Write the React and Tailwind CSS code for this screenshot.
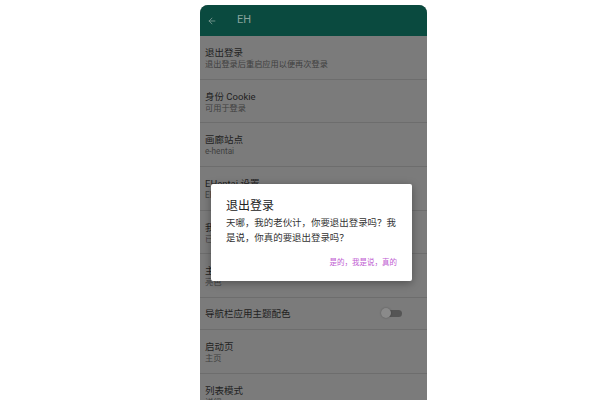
import { ArrowLeft } from "lucide-react";

const items = [
  { title: "退出登录", sub: "退出登录后重启应用以便再次登录" },
  { title: "身份 Cookie", sub: "可用于登录" },
  { title: "画廊站点", sub: "e-hentai" },
  { title: "EHentai 设置", sub: "EHentai 网站的设置" },
  { title: "我的标签", sub: "已关注的标签" },
  { title: "主题", sub: "亮色" },
  { title: "导航栏应用主题配色", toggle: true },
  { title: "启动页", sub: "主页" },
  { title: "列表模式", sub: "详细" },
];

function Row({ item }) {
  if (item.toggle) {
    return (
      <div className="flex h-[32px] items-center justify-between border-b border-[#6d6d6d] pl-[5px] pr-[25px]">
        <span className="text-[9.5px] leading-[12px] text-[#1f1f1f]">{item.title}</span>
        <div className="relative h-[7px] w-[18px] rounded-full bg-[#555555]">
          <div className="absolute -left-[3px] -top-[2px] h-[10px] w-[10px] rounded-full bg-[#8a8a8a] shadow-[0_0_2px_rgba(0,0,0,0.3)]" />
        </div>
      </div>
    );
  }
  return (
    <div className="flex h-[43.7px] flex-col border-b border-[#6d6d6d] pl-[5px] pt-[11px]">
      <span className="text-[9.5px] leading-[12px] text-[#1f1f1f]">{item.title}</span>
      <span className="text-[8.2px] leading-[11px] text-[#404040]">{item.sub}</span>
    </div>
  );
}

export default function App() {
  return (
    <div className="flex min-h-[400px] bg-white pl-[200px] font-['Roboto','Noto_Sans_CJK_SC',sans-serif]">
      <div className="relative mt-[5px] h-[395px] w-[227px] overflow-hidden rounded-t-[8px] bg-[#7b7b7b]">
        <header className="flex h-[31px] items-center gap-[20px] bg-[#0a4a3f] pl-[7px]">
          <ArrowLeft size={10} strokeWidth={2} className="text-[#7f9c95]" />
          <span className="text-[11px] text-[#86a39c]">EH</span>
        </header>
        <div className="flex flex-col">
          {items.map((it) => (
            <Row key={it.title} item={it} />
          ))}
        </div>

        <div className="absolute left-[11px] top-[179px] flex h-[97px] w-[201px] flex-col rounded-[2px] bg-white px-[15px] pt-[14px] shadow-[0_2px_8px_rgba(0,0,0,0.35)]">
          <h2 className="text-[12px] leading-[16px] text-[#222222]">退出登录</h2>
          <p className="mt-[1px] text-[9.45px] leading-[15px] text-[#333333]">
            天哪，我的老伙计，你要退出登录吗？我是说，你真的要退出登录吗？
          </p>
          <div className="mt-[13px] flex justify-end">
            <span className="text-[7.5px] leading-[10px] text-[#c05cd2]">是的，我是说，真的</span>
          </div>
        </div>
      </div>
    </div>
  );
}
